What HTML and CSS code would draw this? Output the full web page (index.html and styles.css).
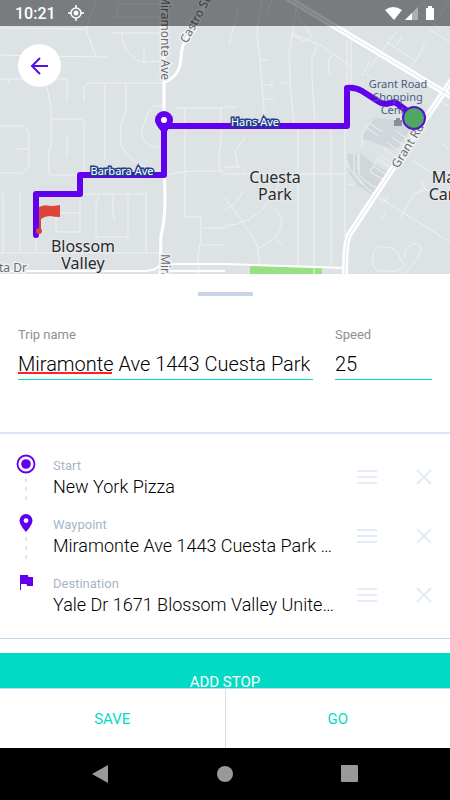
FILE: index.html
```html
<!DOCTYPE html>
<html lang="en">

<head>
	<meta charset="UTF-8">
	<meta name="viewport" content="width=device-width, initial-scale=1">
	<title>Edit trip</title>
	<link rel="stylesheet" href="styles.css">
</head>

<body>
	<header class="map">
		<svg class="map_canvas" viewBox="0 0 450 274" preserveAspectRatio="xMidYMin slice" role="img" aria-label="Route map">
			<!-- blocks -->
			<path class="block" d="M347 154h14l9 7 22 14-15 23-20-13-8-13zM372 118l24 2 14 10-14 20-35-12z" />
			<path class="park" d="M250 266l72 2v6h-72z" />

			<!-- small streets -->
			<g class="street">
				<path d="M0 28l86 1 10-28M86 29l10 28M0 55l40 1 69 1M0 79h67v23M9 79v6M47 87l4 20v41h-2v27M50 119h31q6 4 3 8v46M0 126h22q7 3 7 9v31q-4 7-10 7H0M15 149h14M84 102V88q1-5 10-5h71M105 83v77M126 83v28l-5 14v20q9 15 23 22" />
				<path d="M112 33h49M122 33q0 14 9 22 7 8 14 7l20-1M144 50v12M117 16V4h48M111 17h50M175 108h50M185 108v109h16M201 217v20l-3 20 1 17M221 108v36q-6 25 4 33M163 106h-9q-5 1-13 27 3 12 14 14h9" />
				<path d="M3 193v60M20 193v60M36 225v28M0 253h163M80 194h66v59M96 237v-33l3-10M96 237h32v-43M113 194v20l2 6M80 213H56v19h24V194M67 135v23M49 175h30M163 176q15-5 37-5h23M203 228h22M201 245h24" />
				<path d="M262 0l-5 33 3 27 4 50 1 14M260 60h10M263 85h9v-4M264 99h10M296 0v9l-7 45 2 40 3 31M291 83h-10M317 46l-5 12v20l3 47M329 74V59l4-4M347 40v45M351 40v46M292 33l32 14 26 19M297 9l3 12 7 7 5 9-8 4-12-6M225 107h12" />
				<path d="M238 10l-9 35M272 0l-6 15M396 32l-28 38M385 41l31 20 9-17M370 61l-8 15M402 37l-6 8M416 61l-12 14M425 0v13l10 8 15-20M430 30l20 12M415 10l23 17M366 74l12 8M425 0l-20 22M450 85l-9 17 9 5" />
				<path d="M298 128v138M314 128v146M331 128v138M225 174h120M345 128v108q3 7 8 3M346 160q7 20 31 36l73 46M348 185l6-1M378 197l5 7 5-8M382 219l4-8M400 218l13-23 12-6-4-8M425 189l25 12M412 160l22 14 16-2M443 144l7 6" />
				<path d="M225 198q20 26 32 47l3 19M225 226q26-2 42-22 10-13 12-22M225 209q12-3 18-18M225 167h15l5 4M245 137l-10 15 3 15M275 208q8 7 6 20-3 10-23 21M275 238l7 8M373 265v-12q4-8 12-6 13 0 15 11l5 8-8 5h-20zM405 259v-8q5-9 13-7 6 3 1 12l-14 18" />
				<path d="M374 118l-12 16v14M366 127l12 9M369 123l14 9M354 154v18l10 13M358 154v16M359 154v20q6 9 18 14M370 172l8-14 16 11-8 12zM374 166l15 11M378 160l14 10M380 155l16 11M384 149l15 11M388 143l14 10M392 137l14 10M396 131l12 8" />
			</g>

			<!-- main roads -->
			<g class="road">
				<path d="M164 0v172q3 42-3 64l-1 38M164 82q16-5 17-24 0-12 7-22L208 0" />
				<path class="road_thin" d="M0 271h147q10-1 14-7h64M225 264l120 4M160 271h65" />
			</g>
			<path class="highway" d="M284-4l80 48 88 53M456 74l-38 56-69 105q-4 8-4 39" />
			<path class="highway_line" d="M284-4l80 48 88 53M456 74l-38 56-69 105q-4 8-4 39" />

			<!-- road names -->
			<g class="road_name">
				<text transform="translate(161 -6) rotate(90)">Miramonte Ave</text>
				<text transform="translate(187 44) rotate(-62)">Castro St</text>
				<text transform="translate(161 254) rotate(90)">Miramonte Ave</text>
				<text transform="translate(398 169) rotate(-58)">Grant Rd</text>
				<text x="-1" y="272">ta Dr</text>
			</g>

			<path class="route" d="M36 235v-41h44v-19h84v-49M164 126h183V88q8-1 15 3l14 9q5 4 10 4l9-2 19 14" />

			<g class="place">
				<text x="83" y="252">Blossom</text>
				<text x="83" y="269">Valley</text>
				<text x="275" y="183">Cuesta</text>
				<text x="275" y="200">Park</text>
				<text x="455" y="183">Maple</text>
				<text x="457" y="200">Canyon</text>
			</g>
			<g class="shop">
				<text x="398" y="88">Grant Road</text>
				<text x="398" y="101">Shopping</text>
				<text x="398" y="114">Center</text>
				<path d="M394 120h2v-2h4v2h2v6h-8z" />
			</g>
			<g class="street_name">
				<text x="255" y="126">Hans Ave</text>
				<text x="122" y="175">Barbara Ave</text>
			</g>

			<!-- markers -->
			<path class="pin" d="M164 111a9 9 0 0 0-9 9c0 5 6 10 9 16 3-6 9-11 9-16a9 9 0 0 0-9-9z" />
			<circle class="pin_hole" cx="164" cy="120" r="3" />
			<circle class="start_dot" cx="414" cy="118" r="11" />
			<path class="red_flag" d="M39 207q6-3 11-1 5 0 10-1v12q-6 0-10-1-5 0-9 3v10h-2z" />
			<circle class="red_flag" cx="39" cy="231" r="3" />
		</svg>

		<div class="status_bar">
			<span>10:21</span>
			<svg width="16" height="16" viewBox="0 0 16 16">
				<circle cx="8" cy="8" r="5" fill="none" stroke="#fff" stroke-width="1.500" />
				<circle cx="8" cy="8" r="2.500" fill="#fff" />
				<path d="M8 0v3M8 13v3M0 8h3M13 8h3" stroke="#fff" stroke-width="1.500" />
			</svg>
			<svg class="status_icons" width="50" height="16" viewBox="0 0 50 16">
				<path fill="#fff" d="M0 5q8-6 17 0L9 15z" />
				<path fill="#aeb0b0" d="M33 2v13H20z" />
				<path fill="#fff" d="M27 8v7h-7z" />
				<path fill="#fff" d="M41 3h2V1h4v2h2v12h-8z" />
			</svg>
		</div>

		<button class="back" aria-label="Back">
			<svg width="20" height="20" viewBox="0 0 20 20">
				<path d="M18 10H2M10 2l-8 8 8 8" />
			</svg>
		</button>
	</header>

	<main class="sheet">
		<div class="handle"></div>

		<form class="trip">
			<div class="field field_name">
				<label for="trip_name">Trip name</label>
				<input type="text" id="trip_name" value="Miramonte Ave 1443 Cuesta Park" spellcheck="false">
				<span class="typo"></span>
			</div>
			<div class="field field_speed">
				<label for="speed">Speed</label>
				<input type="text" id="speed" value="25">
			</div>
		</form>

		<ul class="stops">
			<li class="stop">
				<div class="stop_icon">
					<svg width="20" height="20" viewBox="0 0 20 20">
						<circle cx="10" cy="10" r="8.500" fill="none" stroke="#6200ee" stroke-width="1.800" />
						<circle cx="10" cy="10" r="4.800" fill="#6200ee" />
					</svg>
					<svg class="dashes" width="2" height="24" viewBox="0 0 2 24"><path d="M1 0v24" /></svg>
				</div>
				<div class="stop_text">
					<span class="stop_kind">Start</span>
					<span class="stop_name">New York Pizza</span>
				</div>
				<button class="icon_button" aria-label="Move">
					<svg width="20" height="14" viewBox="0 0 20 14"><path d="M0 1h20M0 7h20M0 13h20" /></svg>
				</button>
				<button class="icon_button" aria-label="Remove">
					<svg width="16" height="16" viewBox="0 0 16 16"><path d="M1 1l14 14M15 1L1 15" /></svg>
				</button>
			</li>
			<li class="stop">
				<div class="stop_icon">
					<svg width="20" height="20" viewBox="0 0 20 20">
						<path fill="#6200ee" fill-rule="evenodd" d="M10 1a6.500 6.500 0 0 0-6.500 6.500C3.500 12 10 19 10 19s6.500-7 6.500-11.500A6.500 6.500 0 0 0 10 1zm0 9a2.400 2.400 0 1 1 0-4.800 2.400 2.400 0 0 1 0 4.800z" />
					</svg>
					<svg class="dashes" width="2" height="24" viewBox="0 0 2 24"><path d="M1 0v24" /></svg>
				</div>
				<div class="stop_text">
					<span class="stop_kind">Waypoint</span>
					<span class="stop_name">Miramonte Ave 1443 Cuesta Park Mountain View</span>
				</div>
				<button class="icon_button" aria-label="Move">
					<svg width="20" height="14" viewBox="0 0 20 14"><path d="M0 1h20M0 7h20M0 13h20" /></svg>
				</button>
				<button class="icon_button" aria-label="Remove">
					<svg width="16" height="16" viewBox="0 0 16 16"><path d="M1 1l14 14M15 1L1 15" /></svg>
				</button>
			</li>
			<li class="stop">
				<div class="stop_icon">
					<svg width="20" height="20" viewBox="0 0 20 20">
						<path fill="#6200ee" d="M4 3h8l.4 2H17v9h-6l-.4-2H5v6H4z" />
					</svg>
				</div>
				<div class="stop_text">
					<span class="stop_kind">Destination</span>
					<span class="stop_name">Yale Dr 1671 Blossom Valley United States</span>
				</div>
				<button class="icon_button" aria-label="Move">
					<svg width="20" height="14" viewBox="0 0 20 14"><path d="M0 1h20M0 7h20M0 13h20" /></svg>
				</button>
				<button class="icon_button" aria-label="Remove">
					<svg width="16" height="16" viewBox="0 0 16 16"><path d="M1 1l14 14M15 1L1 15" /></svg>
				</button>
			</li>
		</ul>

		<button class="add_stop">ADD STOP</button>
	</main>

	<div class="actions">
		<button>SAVE</button>
		<button>GO</button>
	</div>

	<nav class="android_nav">
		<button aria-label="Back"><svg width="18" height="18" viewBox="0 0 18 18"><path d="M16 0v18L0 9z" /></svg></button>
		<button aria-label="Home"><svg width="18" height="18" viewBox="0 0 18 18"><circle cx="9" cy="9" r="8" /></svg></button>
		<button aria-label="Recent apps"><svg width="18" height="18" viewBox="0 0 18 18"><rect x="1" width="17" height="17" rx="1" /></svg></button>
	</nav>
</body>

</html>
```
FILE: styles.css
```css
* {
	box-sizing: border-box;
}

body {
	margin: 0;
	height: 100vh;
	display: flex;
	flex-direction: column;
	font-family: Roboto, "Liberation Sans", sans-serif;
	color: #000;
	background: #fff;
}

button {
	padding: 0;
	border: none;
	background: none;
	font: inherit;
}

svg {
	display: block;
}

/* map */
.map {
	position: relative;
	flex: none;
	height: 274px;
	background: #dde2e5;
	overflow: hidden;
}

.map_canvas {
	width: 100%;
	height: 100%;
	font-family: "Noto Sans", sans-serif;
}

.block {
	fill: #d0d7da;
}

.park {
	fill: #98e081;
}

.street {
	fill: none;
	stroke: #eff2f3;
	stroke-width: 1;
}

.road {
	fill: none;
	stroke: #fff;
	stroke-width: 3;
}

.road_thin {
	stroke-width: 2;
}

.highway {
	fill: none;
	stroke: #fff;
	stroke-width: 6;
}

.highway_line {
	fill: none;
	stroke: #dde2e5;
	stroke-width: 1;
}

.road_name {
	font-size: 12px;
	fill: #6b6e71;
	stroke: #eef1f2;
	stroke-width: 3px;
	paint-order: stroke;
}

.route {
	fill: none;
	stroke: #6200ee;
	stroke-width: 6;
	stroke-linecap: round;
	stroke-linejoin: round;
}

.place {
	font-size: 16px;
	text-anchor: middle;
	fill: #2b2b2b;
	stroke: #e6eaec;
	stroke-width: 2px;
	paint-order: stroke;
}

.shop {
	font-size: 11px;
	text-anchor: middle;
	fill: #47607f;
}

.shop path {
	fill: #84909b;
}

.street_name {
	font-size: 11px;
	text-anchor: middle;
	fill: #fff;
	stroke: #21408c;
	stroke-width: 3px;
	paint-order: stroke;
}

.pin {
	fill: #6200ee;
}

.pin_hole {
	fill: #fff;
}

.start_dot {
	fill: #4fa764;
	stroke: #5a10d0;
	stroke-width: 2;
}

.red_flag {
	fill: #dc4538;
}

.status_bar {
	position: absolute;
	top: 0;
	left: 0;
	right: 0;
	height: 26px;
	padding: 0 15px;
	display: flex;
	align-items: center;
	gap: 12px;
	background: rgba(0, 0, 0, 0.45);
	color: #fff;
	font-size: 16px;
	font-weight: 500;
}

.status_icons {
	margin-left: auto;
}

.back {
	position: absolute;
	top: 44px;
	left: 18px;
	width: 43px;
	height: 43px;
	display: flex;
	align-items: center;
	justify-content: center;
	border-radius: 50%;
	background: #fff;
}

.back path {
	fill: none;
	stroke: #5010e8;
	stroke-width: 2;
}

/* bottom sheet */
.sheet {
	flex: 1;
	min-height: 0;
	overflow: hidden;
}

.handle {
	width: 55px;
	height: 4px;
	margin: 18px auto 30px;
	background: #c8d4e3;
}

.trip {
	display: flex;
	gap: 22px;
	padding: 0 18px 52px;
	border-bottom: 2px solid #dce7f4;
}

.field {
	position: relative;
	display: flex;
	flex-direction: column;
}

.field_name {
	flex: 1;
	min-width: 0;
}

.field_speed {
	flex: none;
	width: 97px;
}

.field label {
	font-size: 13px;
	line-height: 18px;
	color: #909090;
}

.field input {
	width: 100%;
	height: 36px;
	padding: 4px 0 0;
	border: none;
	border-bottom: 1px solid #03dac6;
	outline: none;
	background: none;
	font: 300 20px Roboto, "Liberation Sans", sans-serif;
	color: #000;
}

/* spelling mark under the first word */
.typo {
	position: absolute;
	left: 0;
	bottom: 6px;
	width: 94px;
	height: 2px;
	background: #f22;
}

.stops {
	margin: 0;
	padding: 20px 16px 7px;
	list-style: none;
	border-bottom: 1px solid #bdd6ea;
}

.stop {
	display: flex;
	height: 59px;
}

.stop_icon {
	flex: none;
	width: 20px;
	margin-right: 17px;
}

.dashes {
	margin: 4px auto 0;
}

.dashes path {
	stroke: #e0e5ee;
	stroke-width: 2;
	stroke-dasharray: 4 5;
}

.stop_text {
	flex: 1;
	min-width: 0;
	padding-top: 3px;
	margin-right: 20px;
}

.stop_kind {
	display: block;
	font-size: 13px;
	line-height: 18px;
	color: #a9b5c6;
}

.stop_name {
	display: block;
	font-size: 18px;
	font-weight: 300;
	line-height: 24px;
	white-space: nowrap;
	overflow: hidden;
	text-overflow: ellipsis;
}

.icon_button {
	flex: none;
	width: 20px;
	height: 46px;
	display: flex;
	align-items: center;
	justify-content: center;
}

.icon_button + .icon_button {
	margin-left: 37px;
}

.icon_button path {
	fill: none;
	stroke: #e2ebf6;
	stroke-width: 2;
}

.add_stop {
	display: block;
	width: 100%;
	height: 58px;
	margin-top: 14px;
	background: #03dac6;
	color: #fff;
	font-size: 15px;
}

/* bottom buttons */
.actions {
	flex: none;
	display: flex;
	height: 60px;
	border-top: 1px solid #c4dcea;
}

.actions button {
	flex: 1;
	color: #03dac6;
	font-size: 15px;
}

.actions button + button {
	border-left: 1px solid #d0dfec;
}

.android_nav {
	flex: none;
	display: flex;
	justify-content: center;
	gap: 106px;
	height: 52px;
	background: #000;
}

.android_nav button {
	display: flex;
	align-items: center;
}

.android_nav path,
.android_nav circle,
.android_nav rect {
	fill: #999;
}
```
